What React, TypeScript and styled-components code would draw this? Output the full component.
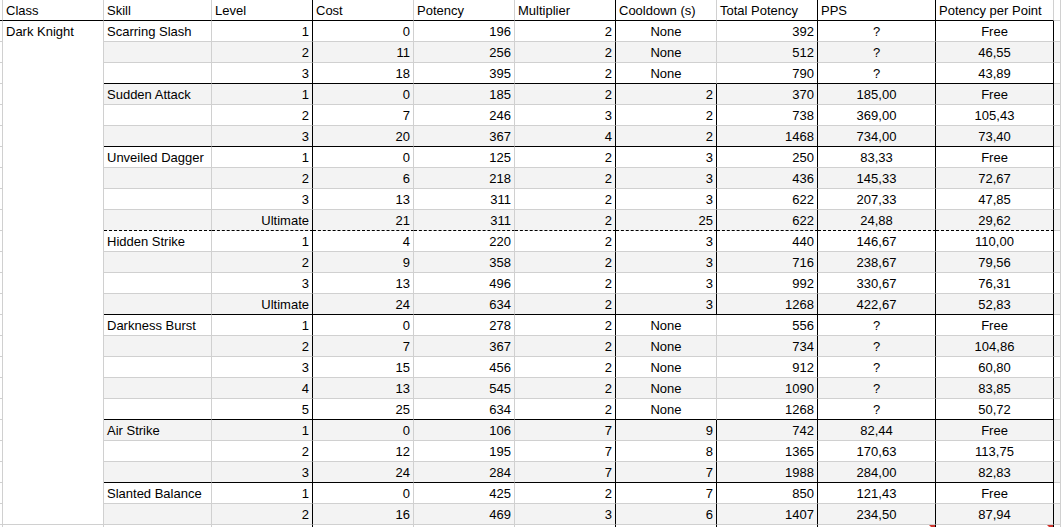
import * as React from 'react'
import styled, { createGlobalStyle } from 'styled-components'

const GRID = '#d0d0d0'
const INK = '#000000'
const BAND = '#f3f3f3'

const GlobalStyle = createGlobalStyle`
  html, body {
    margin: 0;
    padding: 0;
    background: #ffffff;
    overflow: hidden;
  }
  body {
    font-family: "Liberation Sans", Arial, sans-serif;
    font-size: 13px;
    color: ${INK};
  }
`

// strip, class, skill, level, cost, potency, multiplier, cooldown, total, pps, ppp, extra
const Sheet = styled.div`
  display: grid;
  grid-template-columns: 3px 101px 108px repeat(6, 101px) 118px 118px 7px;
  grid-auto-rows: 21px;
  width: 1061px;
  height: 527px;
  overflow: hidden;
`

type CellProps = {
  $align?: 'left' | 'right' | 'center'
  $bg?: string
  $right?: string
  $bottom?: string
  $bottomStyle?: 'solid' | 'dashed'
}

const Cell = styled.div<CellProps>`
  position: relative;
  box-sizing: border-box;
  display: flex;
  align-items: flex-end;
  justify-content: ${({ $align }) =>
    $align === 'right' ? 'flex-end' : $align === 'center' ? 'center' : 'flex-start'};
  padding: 0 3px 2px;
  line-height: 15px;
  white-space: nowrap;
  overflow: hidden;
  background: ${({ $bg }) => $bg || '#ffffff'};
  border-right: 1px solid ${({ $right }) => $right || GRID};
  border-bottom: 1px ${({ $bottomStyle }) => $bottomStyle || 'solid'}
    ${({ $bottom }) => $bottom || GRID};
`

const Strip = styled(Cell)`
  padding: 0;
`

const ClassCell = styled(Cell)`
  grid-column: 2;
  grid-row: 2 / span 24;
  align-items: flex-start;
  padding-top: 3px;
`

const CommentMark = styled.span`
  position: absolute;
  top: 0;
  right: 0;
  width: 0;
  height: 0;
  border-top: 6px solid #d0342c;
  border-left: 6px solid transparent;
`

type Row = {
  skill?: string
  level: string
  cost: number
  potency: number
  mult: number
  cooldown: string
  total: number
  pps: string
  ppp: string
  end?: 'solid' | 'dashed'
  boxed?: boolean
}

const rows: Row[] = [
  { skill: 'Scarring Slash', level: '1', cost: 0, potency: 196, mult: 2, cooldown: 'None', total: 392, pps: '?', ppp: 'Free' },
  { level: '2', cost: 11, potency: 256, mult: 2, cooldown: 'None', total: 512, pps: '?', ppp: '46,55' },
  { level: '3', cost: 18, potency: 395, mult: 2, cooldown: 'None', total: 790, pps: '?', ppp: '43,89', end: 'solid' },
  { skill: 'Sudden Attack', level: '1', cost: 0, potency: 185, mult: 2, cooldown: '2', total: 370, pps: '185,00', ppp: 'Free', boxed: true },
  { level: '2', cost: 7, potency: 246, mult: 3, cooldown: '2', total: 738, pps: '369,00', ppp: '105,43', boxed: true },
  { level: '3', cost: 20, potency: 367, mult: 4, cooldown: '2', total: 1468, pps: '734,00', ppp: '73,40', end: 'solid', boxed: true },
  { skill: 'Unveiled Dagger', level: '1', cost: 0, potency: 125, mult: 2, cooldown: '3', total: 250, pps: '83,33', ppp: 'Free', boxed: true },
  { level: '2', cost: 6, potency: 218, mult: 2, cooldown: '3', total: 436, pps: '145,33', ppp: '72,67', boxed: true },
  { level: '3', cost: 13, potency: 311, mult: 2, cooldown: '3', total: 622, pps: '207,33', ppp: '47,85', boxed: true },
  { level: 'Ultimate', cost: 21, potency: 311, mult: 2, cooldown: '25', total: 622, pps: '24,88', ppp: '29,62', end: 'dashed', boxed: true },
  { skill: 'Hidden Strike', level: '1', cost: 4, potency: 220, mult: 2, cooldown: '3', total: 440, pps: '146,67', ppp: '110,00', boxed: true },
  { level: '2', cost: 9, potency: 358, mult: 2, cooldown: '3', total: 716, pps: '238,67', ppp: '79,56', boxed: true },
  { level: '3', cost: 13, potency: 496, mult: 2, cooldown: '3', total: 992, pps: '330,67', ppp: '76,31', boxed: true },
  { level: 'Ultimate', cost: 24, potency: 634, mult: 2, cooldown: '3', total: 1268, pps: '422,67', ppp: '52,83', end: 'solid', boxed: true },
  { skill: 'Darkness Burst', level: '1', cost: 0, potency: 278, mult: 2, cooldown: 'None', total: 556, pps: '?', ppp: 'Free' },
  { level: '2', cost: 7, potency: 367, mult: 2, cooldown: 'None', total: 734, pps: '?', ppp: '104,86' },
  { level: '3', cost: 15, potency: 456, mult: 2, cooldown: 'None', total: 912, pps: '?', ppp: '60,80' },
  { level: '4', cost: 13, potency: 545, mult: 2, cooldown: 'None', total: 1090, pps: '?', ppp: '83,85' },
  { level: '5', cost: 25, potency: 634, mult: 2, cooldown: 'None', total: 1268, pps: '?', ppp: '50,72', end: 'solid' },
  { skill: 'Air Strike', level: '1', cost: 0, potency: 106, mult: 7, cooldown: '9', total: 742, pps: '82,44', ppp: 'Free', boxed: true },
  { level: '2', cost: 12, potency: 195, mult: 7, cooldown: '8', total: 1365, pps: '170,63', ppp: '113,75', boxed: true },
  { level: '3', cost: 24, potency: 284, mult: 7, cooldown: '7', total: 1988, pps: '284,00', ppp: '82,83', end: 'solid', boxed: true },
  { skill: 'Slanted Balance', level: '1', cost: 0, potency: 425, mult: 2, cooldown: '7', total: 850, pps: '121,43', ppp: 'Free', boxed: true },
  { level: '2', cost: 16, potency: 469, mult: 3, cooldown: '6', total: 1407, pps: '234,50', ppp: '87,94', boxed: true },
]

const headers: { label: string; right: string }[] = [
  { label: 'Skill', right: GRID },
  { label: 'Level', right: INK },
  { label: 'Cost', right: GRID },
  { label: 'Potency', right: GRID },
  { label: 'Multiplier', right: INK },
  { label: 'Cooldown (s)', right: GRID },
  { label: 'Total Potency', right: INK },
  { label: 'PPS', right: INK },
  { label: 'Potency per Point', right: GRID },
]

const DataRow: React.FC<{ row: Row; index: number }> = ({ row, index }) => {
  const bg = index % 2 === 1 ? BAND : '#ffffff'
  const bottom = row.end ? INK : GRID
  const style = row.end === 'dashed' ? 'dashed' : 'solid'
  const shared = { $bg: bg, $bottom: bottom, $bottomStyle: style } as const
  const numericCd = row.cooldown !== 'None'

  return (
    <>
      <Strip />
      <Cell {...shared}>{row.skill}</Cell>
      <Cell {...shared} $align="right" $right={INK}>{row.level}</Cell>
      <Cell {...shared} $align="right">{row.cost}</Cell>
      <Cell {...shared} $align="right">{row.potency}</Cell>
      <Cell {...shared} $align="right" $right={INK}>{row.mult}</Cell>
      <Cell {...shared} $align={numericCd ? 'right' : 'center'} $right={row.boxed ? INK : GRID}>
        {row.cooldown}
      </Cell>
      <Cell {...shared} $align="right" $right={INK}>{row.total}</Cell>
      <Cell {...shared} $align="center" $right={INK}>{row.pps}</Cell>
      <Cell {...shared} $align="center" $right={INK}>{row.ppp}</Cell>
      <Cell $bg={bg} />
    </>
  )
}

const App: React.FC = () => {
  return (
    <>
      <GlobalStyle />
      <Sheet>
        {/* Header */}
        <Strip $bottom={INK} />
        <Cell $bottom={INK}>Class</Cell>
        {headers.map((h) => (
          <Cell key={h.label} $bottom={INK} $right={h.right}>
            {h.label}
          </Cell>
        ))}
        <Cell />

        {/* Merged class column */}
        <ClassCell>Dark Knight</ClassCell>

        {rows.map((row, i) => (
          <DataRow key={i} row={row} index={i} />
        ))}

        {/* Next row, partly visible */}
        <Strip />
        <Cell />
        <Cell />
        <Cell $right={INK} />
        <Cell />
        <Cell />
        <Cell $right={INK} />
        <Cell $right={INK} />
        <Cell $right={INK} />
        <Cell $right={INK}>
          <CommentMark />
        </Cell>
        <Cell $right={INK}>
          <CommentMark />
        </Cell>
        <Cell />
      </Sheet>
    </>
  )
}

export default App
